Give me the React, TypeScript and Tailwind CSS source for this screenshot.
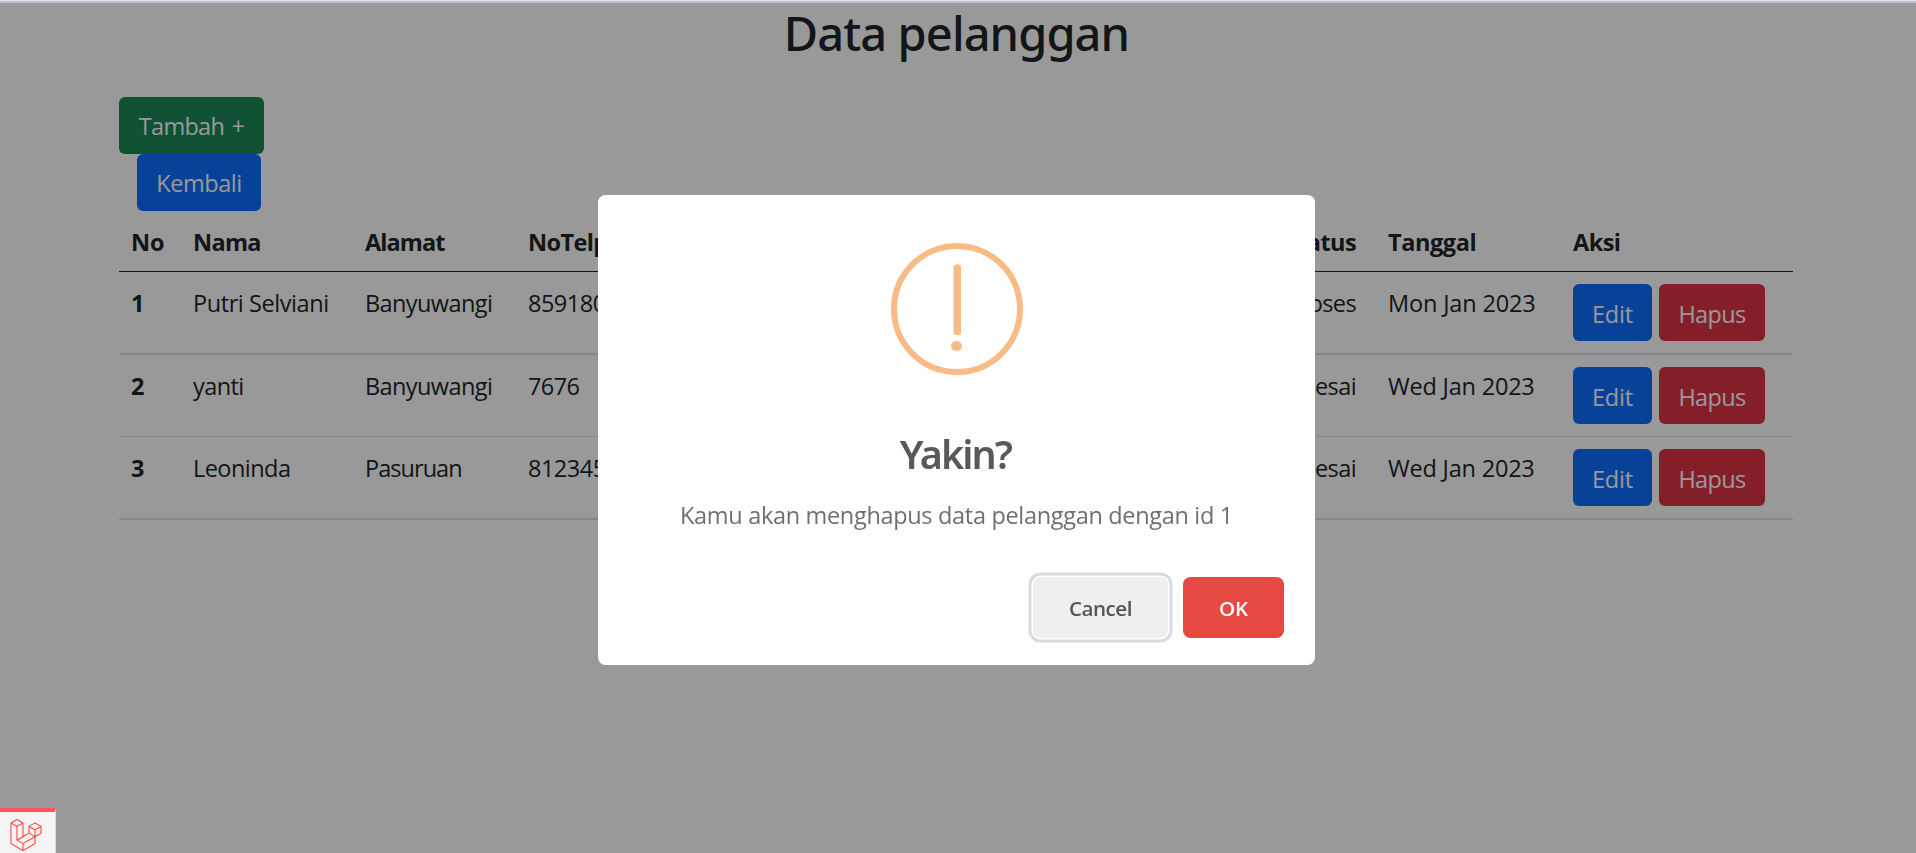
import React from "react";
import { SiLaravel } from "react-icons/si";

type Cell = { text: string; cls: string };

const columns: { label: string; width: string; cls: string }[] = [
  { label: "No", width: "w-[62px]", cls: "tracking-[0px]" },
  { label: "Nama", width: "w-[172px]", cls: "tracking-[-0.7px]" },
  { label: "Alamat", width: "w-[163px]", cls: "tracking-[-0.92px]" },
  { label: "NoTelp", width: "w-[164px]", cls: "tracking-[-0.6px]" },
  { label: "Status", width: "w-[696px]", cls: "tracking-[-0.6px] text-right pr-[20px]" },
  { label: "Tanggal", width: "w-[185px]", cls: "tracking-[-0.43px]" },
  { label: "Aksi", width: "w-[232px]", cls: "tracking-[-0.55px]" },
];

const rows: { height: string; cells: Cell[] }[] = [
  {
    height: "h-[83px] border-b-2",
    cells: [
      { text: "Putri Selviani", cls: "tracking-[-0.43px]" },
      { text: "Banyuwangi", cls: "tracking-[-0.6px]" },
      { text: "859180", cls: "tracking-[-0.5px]" },
      { text: "Proses", cls: "tracking-[-0.6px] text-right pr-[20px]" },
      { text: "Mon Jan 2023", cls: "tracking-[-0.15px]" },
    ],
  },
  {
    height: "h-[82px] border-b",
    cells: [
      { text: "yanti", cls: "tracking-[-0.6px]" },
      { text: "Banyuwangi", cls: "tracking-[-0.6px]" },
      { text: "7676", cls: "tracking-[-0.6px]" },
      { text: "Selesai", cls: "tracking-[-0.6px] text-right pr-[20px]" },
      { text: "Wed Jan 2023", cls: "tracking-[-0.2px]" },
    ],
  },
  {
    height: "h-[83px] border-b-2",
    cells: [
      { text: "Leoninda", cls: "tracking-[-0.55px]" },
      { text: "Pasuruan", cls: "tracking-[-0.95px]" },
      { text: "812345", cls: "tracking-[-0.5px]" },
      { text: "Selesai", cls: "tracking-[-0.6px] text-right pr-[20px]" },
      { text: "Wed Jan 2023", cls: "tracking-[-0.2px]" },
    ],
  },
];

function Button({ className, children }: { className: string; children: React.ReactNode }) {
  return (
    <button
      className={`flex h-[57px] shrink-0 justify-center rounded-[6px] leading-[36px] whitespace-nowrap text-white ${className}`}
    >
      {children}
    </button>
  );
}

function Row({ index }: { index: number }) {
  const row = rows[index];
  return (
    <div className={`flex border-[#dee2e6] ${row.height}`}>
      <div className={`shrink-0 pt-[13px] pl-3 font-bold ${columns[0].width}`}>{index + 1}</div>
      {row.cells.map((cell, i) => (
        <div
          key={i}
          className={`shrink-0 overflow-hidden pt-[13px] pl-3 whitespace-nowrap ${columns[i + 1].width} ${cell.cls}`}
        >
          {cell.text}
        </div>
      ))}
      <div className={`flex shrink-0 gap-[7px] pt-3 pl-3 ${columns[6].width}`}>
        <Button className="w-[79px] bg-[#0d6efd] pt-[12px] tracking-[-0.2px]">Edit</Button>
        <Button className="w-[106px] bg-[#dc3545] pt-[12px] tracking-[-0.65px]">Hapus</Button>
      </div>
    </div>
  );
}

function ConfirmDialog() {
  return (
    <div className="fixed inset-0 z-10 bg-black/40">
      <div className="mt-[195px] ml-[598px] flex h-[470px] w-[717px] flex-col items-center rounded-[7.5px] bg-white">
        <svg className="mt-[47.5px] ml-px h-[132px] w-[132px] shrink-0" viewBox="0 0 132 132" fill="none">
          <circle cx="66" cy="66" r="63" stroke="#f8bb86" strokeWidth="6" />
          <rect x="62.5" y="21.5" width="7.5" height="70.5" rx="3" fill="#f8bb86" />
          <ellipse cx="65.5" cy="103" rx="5.5" ry="5" fill="#f8bb86" />
        </svg>
        <h2 className="mt-[49px] mr-[2px] font-['Noto_Sans',sans-serif] text-[39.5px] leading-[60px] font-semibold tracking-[-1.9px] text-[#595959]">
          Yakin?
        </h2>
        <p className="mt-[13px] text-[23.5px] leading-[36px] tracking-[-0.32px] text-[#6f6f6f]">
          Kamu akan menghapus data pelanggan dengan id 1
        </p>
        <div className="mt-[44.5px] flex w-full gap-[15px] pl-[435px] text-[20.6px] font-semibold">
          <button className="h-[61px] w-[135px] rounded-[7.5px] bg-[#efefef] pt-px leading-[61px] tracking-[-0.5px] text-[#555] shadow-[0_0_0_1.5px_#fff,0_0_0_4.5px_#d5dce2]">
            Cancel
          </button>
          <button className="h-[61px] w-[101px] rounded-[7.5px] bg-[#e64942] pt-px leading-[61px] tracking-[-0.2px] text-white">
            OK
          </button>
        </div>
      </div>
    </div>
  );
}

export default function App() {
  return (
    <div className="h-[853px] w-[1916px] overflow-hidden bg-white font-['Open_Sans','Noto_Sans',sans-serif] text-[23.5px] leading-[36px] text-[#212529]">
      <div className="relative z-20 h-[3px] border-t border-[#dfe1eb] bg-[#bebfc8]" />
      <h1 className="mt-px pr-[3px] text-center font-['Noto_Sans',sans-serif] text-[47px] leading-[58px] font-medium tracking-[-0.92px]">
        Data pelanggan
      </h1>
      <main className="mt-[35px] ml-[119px] w-[1674px]">
        <Button className="w-[145px] bg-[#198754] pt-[11px] tracking-[-0.73px] [word-spacing:2px]">Tambah +</Button>
        <div className="pl-[18px]">
          <Button className="w-[124px] bg-[#0d6efd] pt-[11px] tracking-[-0.45px]">Kembali</Button>
        </div>
        <div className="flex h-[61px] border-b border-[#212529] font-bold">
          {columns.map((c) => (
            <div key={c.label} className={`shrink-0 pt-[13px] pl-3 ${c.width} ${c.cls}`}>
              {c.label}
            </div>
          ))}
        </div>
        {rows.map((_, i) => (
          <Row key={i} index={i} />
        ))}
      </main>
      <ConfirmDialog />
      <div className="fixed bottom-0 left-0 z-20 h-[45px] w-[56px] border-t-4 border-r border-t-[#ff5560] border-r-[#ddd] bg-[#f5f5f5] pt-[7px] pl-[10px]">
        <SiLaravel size={32} color="#ff3b30" />
      </div>
    </div>
  );
}
